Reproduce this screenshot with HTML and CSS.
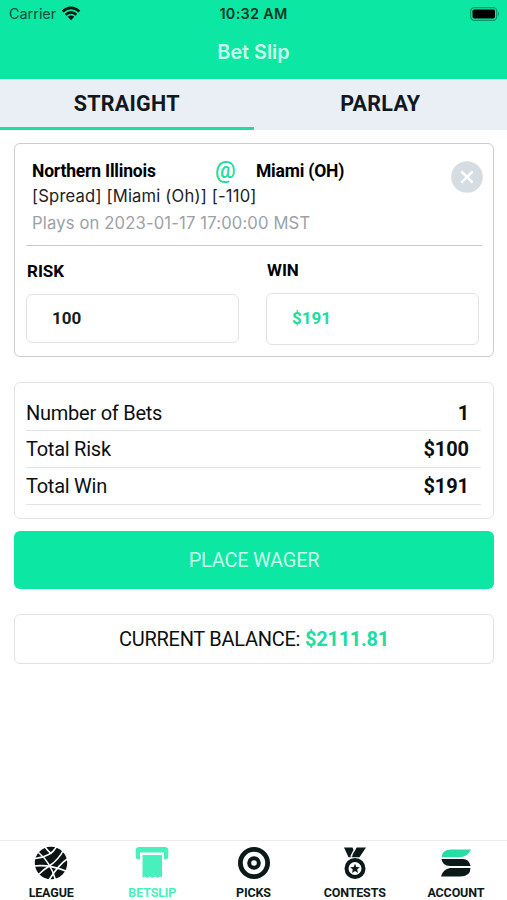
FILE: index.html
```html
<!DOCTYPE html>
<html lang="en">
<head>
<meta charset="utf-8">
<title>Bet Slip</title>
<link rel="stylesheet" href="styles.css">
</head>
<body>
<header class="header">
  <div class="status">
    <div class="carrier"><span>Carrier</span>
      <svg width="20" height="15" viewBox="0 0 20 15"><g fill="none" stroke="#03150f" stroke-width="2.7"><path d="M1.6 5.4Q10-1.8 18.4 5.4"/><path d="M4.6 8.7Q10 4 15.4 8.7"/></g><path d="M6.7 10.7Q10 8.2 13.3 10.7L10 14.2Z" fill="#03150f"/></svg>
    </div>
    <div class="clock">10:32 AM</div>
    <svg class="battery" width="30" height="14" viewBox="0 0 30 14"><rect x=".7" y=".7" width="26" height="12.6" rx="3.6" fill="none" stroke="#079764" stroke-width="1.2"/><rect x="2.5" y="2.4" width="22.5" height="9.2" rx="1.8"/><path d="M28 4.8Q30 7 28 9.2Z" fill="#079764"/></svg>
  </div>
  <h1 class="title">Bet Slip</h1>
</header>
<nav class="tabs">
  <div class="tab active"><span>STRAIGHT</span></div>
  <div class="tab"><span>PARLAY</span></div>
</nav>
<main>
  <section class="card bet">
    <div class="match">
      <div class="info">
        <div class="teams"><b class="home">Northern Illinois</b><span class="at">@</span><b class="away">Miami (OH)</b></div>
        <div class="spread">[Spread] [Miami (Oh)] [-110]</div>
        <div class="date">Plays on 2023-01-17 17:00:00 MST</div>
      </div>
      <svg class="close" width="32" height="32" viewBox="0 0 32 32"><circle cx="16" cy="16" r="15.8" fill="#d5dce2"/><path d="M10.300 10.300l11.400 11.400m0-11.400l-11.400 11.400" stroke="#fff" stroke-width="2.5"/></svg>
    </div>
    <div class="fields">
      <div class="field"><label>RISK</label><div class="box">100</div></div>
      <div class="field win"><label>WIN</label><div class="box">$191</div></div>
    </div>
  </section>
  <section class="card totals">
    <div class="row"><span>Number of Bets</span><b>1</b></div>
    <div class="row"><span>Total Risk</span><b>$100</b></div>
    <div class="row"><span>Total Win</span><b>$191</b></div>
  </section>
  <div class="place"><span>PLACE WAGER</span></div>
  <section class="card balance"><span>CURRENT BALANCE:</span><b>$2111.81</b></section>
</main>
<footer class="nav">
  <div class="item">
    <svg width="34" height="34" viewBox="0 0 34 34"><circle cx="17" cy="17" r="16.2" fill="#0b1413"/><g fill="none" stroke="#fff" stroke-width="1.6"><path d="M23 0Q17 11 1 12.500"/><path d="M29.500 4Q25 13 16 19.500Q9 24 4 29"/><path d="M34 12.500Q25 18 15 34"/><path d="M4.500 6.500Q17 17 21.500 34"/><path d="M0 20Q15 18 33 25.500"/><path d="M11 1Q14 5 17.500 8"/></g></svg>
    <span>LEAGUE</span>
  </div>
  <div class="item on">
    <svg width="34" height="34" viewBox="0 0 34 34"><path d="M4 1H30Q33.300 1 33.300 4.500V10Q33.300 13.500 30 13.500H29V6.500H5V13.500H4Q.7 13.500 .7 10V4.500Q.7 1 4 1Z" fill="#48f0bd"/><path d="M7.500 9H27V32L25 30.500 22.800 32 20 30.500 17.300 32 14.500 30.500 12 32 9.600 30.500 7.500 32Z" fill="#48f0bd"/></svg>
    <span>BETSLIP</span>
  </div>
  <div class="item">
    <svg width="34" height="34" viewBox="0 0 34 34"><g fill="none" stroke="#0b1a18"><circle cx="17" cy="17" r="13.600" stroke-width="4.800"/><circle cx="17" cy="17" r="4.800" stroke-width="4"/></g></svg>
    <span>PICKS</span>
  </div>
  <div class="item">
    <svg width="34" height="34" viewBox="0 0 34 34"><path d="M6 1.500H14.500L16.700 6.500 13 11.300H10.500ZM18.500 1.500H28L21.500 11.300H13.800Z" fill="#0b1a18"/><path d="M17.700 1L12.800 10.800" stroke="#fff" stroke-width="1.400"/><circle cx="17" cy="22.500" r="8.500" fill="#fff" stroke="#0b1a18" stroke-width="4"/><path d="M17 17.800l1.350 3.200 3.450.3-2.600 2.250.8 3.350-3-1.800-3 1.800.8-3.350-2.600-2.250 3.450-.3z" fill="#0b1a18"/></svg>
    <span>CONTESTS</span>
  </div>
  <div class="item">
    <svg width="34" height="34" viewBox="0 0 34 34"><path d="M2.500 12Q2.500 3.500 12 3.500H32Q29 11 20 11.200H2.700Z" fill="#27dda3"/><path d="M2.500 13H24Q30 13 31.500 20H11Q3.500 20 2.500 13ZM11 22H31.500Q31.500 30.500 21 30.500H2Q4 23 11 22Z" fill="#0b1a18"/></svg>
    <span>ACCOUNT</span>
  </div>
</footer>
</body>
</html>
```

FILE: styles.css
```css
* { box-sizing: border-box; }
body { margin: 0; width: 507px; height: 900px; display: flex; flex-direction: column; background: #fff; font-family: Roboto, sans-serif; color: #0b0f12; overflow: hidden; }
svg { display: block; flex: none; }
.header { height: 79px; background: #0de7a4; flex: none; }
.status { height: 27px; display: grid; grid-template-columns: 1fr auto 1fr; align-items: center; padding: 0 7px 0 9px; font-family: Inter, sans-serif; }
.carrier { display: flex; align-items: center; gap: 5px; font-size: 14.4px; color: #074d39; }
.clock { margin-right: 2px; font-size: 14.4px; font-weight: 600; letter-spacing: .3px; color: #043526; }
.battery { justify-self: end; }
.title { margin: 0; text-align: center; font: 600 19.8px/51px Inter, sans-serif; color: #c9fbea; }
.tabs { height: 51px; display: flex; background: #eaeff5; flex: none; }
.tab { flex: 1; display: flex; justify-content: center; line-height: 50px; font-size: 21.5px; font-weight: 700; letter-spacing: .25px; color: #111820; }
.active { border-bottom: 3px solid #20dda2; }
main { flex: 1; padding: 13px 13px 0 14px; display: flex; flex-direction: column; }
.card { border: 1.5px solid #e0e3e6; border-radius: 6px; background: #fff; }
.bet { height: 214px; border-color: #c9cdd1; padding: 0 11px; }
.match { height: 102px; border-bottom: 1px solid #c9cdd1; display: flex; justify-content: space-between; padding-left: 6px; }
.info { padding-top: 15px; white-space: nowrap; }
.teams { display: flex; align-items: center; height: 24px; font-size: 17.5px; line-height: 22px; letter-spacing: -.2px; color: #000; }
.teams b { margin-top: -1px; }
.home { width: 183px; }
.at { width: 41px; font-size: 23px; color: #20dda2; font-weight: 500; }
.spread { font: 16.6px/26px Inter, sans-serif; letter-spacing: .18px; color: #222; }
.date { font: 16.6px/28px Inter, sans-serif; letter-spacing: .16px; color: #9ca1a7; }
.close { margin: 17px -1px 0 0; }
.fields { display: flex; gap: 27px; }
.field { width: 213px; padding-top: 15px; }
.field label { display: block; height: 33px; line-height: 21px; padding-left: 1px; font-size: 17px; font-weight: 700; color: #000; }
.box { height: 49px; border: 1.5px solid #e0e3e6; border-radius: 6px; padding-left: 25px; line-height: 46px; font-size: 17px; font-weight: 700; color: #14201e; }
.win { padding-top: 14px; }
.win .box { height: 52px; line-height: 49px; color: #20dda2; }
.totals { height: 137px; margin-top: 24.5px; padding: 12px 12px 0 11px; }
.row { height: 36.7px; border-bottom: 1.5px solid #e0e3e6; display: flex; justify-content: space-between; padding-right: 12px; font-size: 20px; line-height: 37px; }
.row span { letter-spacing: -.25px; }
.row b { letter-spacing: -.1px; }
.place { height: 58px; margin-top: 12.5px; border-radius: 6px; background: #0de7a4; color: #c9fbea; display: flex; justify-content: center; font-size: 20px; line-height: 58px; letter-spacing: -.25px; }
.balance { height: 50px; margin-top: 25px; display: flex; justify-content: center; gap: 5px; font-size: 20px; line-height: 48px; letter-spacing: -.28px; }
.balance b { color: #20dda2; }
.nav { height: 60px; border-top: 1px solid #ececec; display: grid; grid-template-columns: repeat(5, 101.2px); justify-content: center; padding-top: 5px; flex: none; }
.item { display: flex; flex-direction: column; align-items: center; font-size: 12.5px; font-weight: 700; line-height: 25px; letter-spacing: -.15px; color: #0b1a18; }
.on { color: #48f0bd; }
```
